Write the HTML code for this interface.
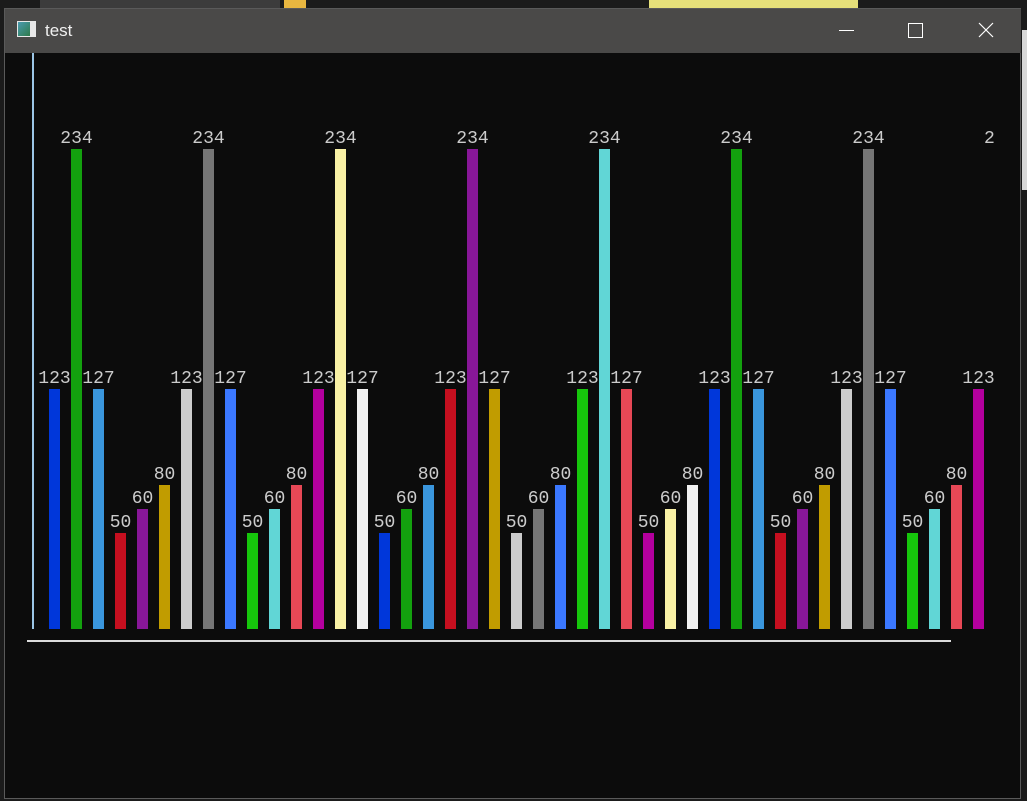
<!DOCTYPE html>
<html><head><meta charset="utf-8"><style>
html,body{margin:0;padding:0;width:1027px;height:801px;overflow:hidden;background:#1b1b1b;position:relative}
div{position:absolute}
.w{left:4px;top:8px;width:1017px;height:791px;background:#0c0c0c;border:1px solid #5a5a5a;box-sizing:border-box}
.t{left:5px;top:9px;width:1016px;height:44px;background:#4a4948}
.l{width:51px;text-align:center;font:18px/18px "Liberation Mono",monospace;color:#cccccc}
.b{width:11px}
.h234{top:149px;height:480px}.h123{top:389px;height:240px}.h50{top:533px;height:96px}.h60{top:509px;height:120px}.h80{top:485px;height:144px}
.l234{top:130px}.l123{top:370px}.l50{top:514px}.l60{top:490px}.l80{top:466px}
</style></head><body>
<div style="left:40px;top:0;width:240px;height:8px;background:#3c3c3c"></div>
<div style="left:284px;top:0;width:22px;height:8px;background:#e8b640"></div>
<div style="left:649px;top:0;width:209px;height:8px;background:#e6e07a"></div>
<div style="left:1022px;top:30px;width:5px;height:160px;background:#d8d8d8"></div>
<div class="w"></div>
<div class="t"></div>
<div style="left:17px;top:21px;width:19px;height:16px;background:#e8e8e8"></div>
<div style="left:18px;top:22px;width:12px;height:14px;background:linear-gradient(135deg,#4a9ab0,#2e7a4a)"></div>
<div style="left:45px;top:20px;font:17px/22px 'Liberation Sans',sans-serif;color:#f0f0f0">test</div>
<div style="left:839px;top:30px;width:15px;height:1px;background:#fff"></div>
<div style="left:908px;top:23px;width:13px;height:13px;border:1px solid #fff"></div>
<svg style="position:absolute;left:978px;top:22px" width="16" height="16"><path d="M1 1L15 15M15 1L1 15" stroke="#fff" stroke-width="1.2"/></svg>
<div style="left:32px;top:53px;width:2px;height:576px;background:#9cc6e6"></div>
<div style="left:27px;top:640px;width:924px;height:2px;background:#dcdcdc"></div>

<div class="l l123" style="left:29px">123</div>
<div class="l l234" style="left:51px">234</div>
<div class="l l127" style="left:73px;top:370px">127</div>
<div class="l l50" style="left:95px">50</div>
<div class="l l60" style="left:117px">60</div>
<div class="l l80" style="left:139px">80</div>
<div class="l l123" style="left:161px">123</div>
<div class="l l234" style="left:183px">234</div>
<div class="l" style="left:205px;top:370px">127</div>
<div class="l l50" style="left:227px">50</div>
<div class="l l60" style="left:249px">60</div>
<div class="l l80" style="left:271px">80</div>
<div class="l l123" style="left:293px">123</div>
<div class="l l234" style="left:315px">234</div>
<div class="l" style="left:337px;top:370px">127</div>
<div class="l l50" style="left:359px">50</div>
<div class="l l60" style="left:381px">60</div>
<div class="l l80" style="left:403px">80</div>
<div class="l l123" style="left:425px">123</div>
<div class="l l234" style="left:447px">234</div>
<div class="l" style="left:469px;top:370px">127</div>
<div class="l l50" style="left:491px">50</div>
<div class="l l60" style="left:513px">60</div>
<div class="l l80" style="left:535px">80</div>
<div class="l l123" style="left:557px">123</div>
<div class="l l234" style="left:579px">234</div>
<div class="l" style="left:601px;top:370px">127</div>
<div class="l l50" style="left:623px">50</div>
<div class="l l60" style="left:645px">60</div>
<div class="l l80" style="left:667px">80</div>
<div class="l l123" style="left:689px">123</div>
<div class="l l234" style="left:711px">234</div>
<div class="l" style="left:733px;top:370px">127</div>
<div class="l l50" style="left:755px">50</div>
<div class="l l60" style="left:777px">60</div>
<div class="l l80" style="left:799px">80</div>
<div class="l l123" style="left:821px">123</div>
<div class="l l234" style="left:843px">234</div>
<div class="l" style="left:865px;top:370px">127</div>
<div class="l l50" style="left:887px">50</div>
<div class="l l60" style="left:909px">60</div>
<div class="l l80" style="left:931px">80</div>
<div class="l l123" style="left:953px">123</div>
<div class="l l234" style="left:984px;width:12px;text-align:left">2</div>

<div class="b h123" style="left:49px;background:#0037DA"></div>
<div class="b h234" style="left:71px;background:#13A10E"></div>
<div class="b h123" style="left:93px;background:#3A96DD"></div>
<div class="b h50" style="left:115px;background:#C50F1F"></div>
<div class="b h60" style="left:137px;background:#881798"></div>
<div class="b h80" style="left:159px;background:#C19C00"></div>
<div class="b h123" style="left:181px;background:#CCCCCC"></div>
<div class="b h234" style="left:203px;background:#767676"></div>
<div class="b h123" style="left:225px;background:#3B78FF"></div>
<div class="b h50" style="left:247px;background:#16C60C"></div>
<div class="b h60" style="left:269px;background:#61D6D6"></div>
<div class="b h80" style="left:291px;background:#E74856"></div>
<div class="b h123" style="left:313px;background:#B4009E"></div>
<div class="b h234" style="left:335px;background:#F9F1A5"></div>
<div class="b h123" style="left:357px;background:#F2F2F2"></div>
<div class="b h50" style="left:379px;background:#0037DA"></div>
<div class="b h60" style="left:401px;background:#13A10E"></div>
<div class="b h80" style="left:423px;background:#3A96DD"></div>
<div class="b h123" style="left:445px;background:#C50F1F"></div>
<div class="b h234" style="left:467px;background:#881798"></div>
<div class="b h123" style="left:489px;background:#C19C00"></div>
<div class="b h50" style="left:511px;background:#CCCCCC"></div>
<div class="b h60" style="left:533px;background:#767676"></div>
<div class="b h80" style="left:555px;background:#3B78FF"></div>
<div class="b h123" style="left:577px;background:#16C60C"></div>
<div class="b h234" style="left:599px;background:#61D6D6"></div>
<div class="b h123" style="left:621px;background:#E74856"></div>
<div class="b h50" style="left:643px;background:#B4009E"></div>
<div class="b h60" style="left:665px;background:#F9F1A5"></div>
<div class="b h80" style="left:687px;background:#F2F2F2"></div>
<div class="b h123" style="left:709px;background:#0037DA"></div>
<div class="b h234" style="left:731px;background:#13A10E"></div>
<div class="b h123" style="left:753px;background:#3A96DD"></div>
<div class="b h50" style="left:775px;background:#C50F1F"></div>
<div class="b h60" style="left:797px;background:#881798"></div>
<div class="b h80" style="left:819px;background:#C19C00"></div>
<div class="b h123" style="left:841px;background:#CCCCCC"></div>
<div class="b h234" style="left:863px;background:#767676"></div>
<div class="b h123" style="left:885px;background:#3B78FF"></div>
<div class="b h50" style="left:907px;background:#16C60C"></div>
<div class="b h60" style="left:929px;background:#61D6D6"></div>
<div class="b h80" style="left:951px;background:#E74856"></div>
<div class="b h123" style="left:973px;background:#B4009E"></div>
</body></html>
